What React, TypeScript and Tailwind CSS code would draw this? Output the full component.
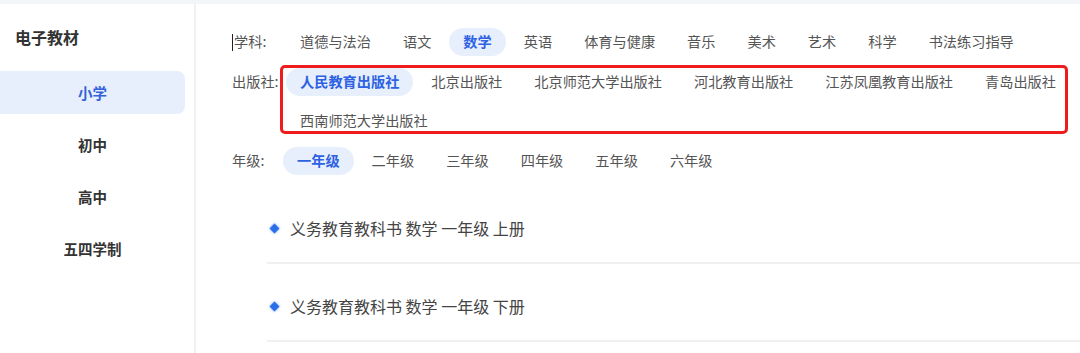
const font = { fontFamily: '"Noto Sans CJK SC", "Noto Sans", sans-serif' }

interface FilterRowProps {
  label: string
  items: string[]
  active: string
  caret?: boolean
  labelWidth?: string
}

function FilterRow({ label, items, active, caret, labelWidth = 'w-[54px]' }: FilterRowProps) {
  return (
    <div className="flex items-start">
      <div className={`${labelWidth} h-[28px] flex items-center text-[14.2px] text-[#555] shrink-0`}>
        {caret && <span className="w-px h-[17px] bg-[#222] mr-px" />}
        {label}
      </div>
      <div className="flex flex-wrap gap-x-1 gap-y-[11px] flex-1">
        {items.map((it) => (
          <div
            key={it}
            className={`h-[28px] px-[14px] flex items-center rounded-full text-[14.2px] whitespace-nowrap ${
              it === active ? 'bg-[#e8effc] text-[#2d62e3] font-bold' : 'text-[#555]'
            }`}
          >
            {it}
          </div>
        ))}
      </div>
    </div>
  )
}

function BookItem({ title }: { title: string }) {
  return (
    <div className="h-[78px] pt-[31px] border-b-2 border-[#f0f0f0] flex items-start">
      <div className="flex items-center h-[22px] pl-[2px]">
        <span className="w-[7px] h-[7px] rotate-45 bg-[#2a6ee8] shadow-[0_0_3px_#7aa7f5] ml-[2px]" />
        <span className="ml-[12px] text-[16px] text-[#444]">{title}</span>
      </div>
    </div>
  )
}

export default function App() {
  const subjects = ['道德与法治', '语文', '数学', '英语', '体育与健康', '音乐', '美术', '艺术', '科学', '书法练习指导']
  const publishers = ['人民教育出版社', '北京出版社', '北京师范大学出版社', '河北教育出版社', '江苏凤凰教育出版社', '青岛出版社', '西南师范大学出版社']
  const grades = ['一年级', '二年级', '三年级', '四年级', '五年级', '六年级']
  const levels = ['小学', '初中', '高中', '五四学制']

  return (
    <div className="w-[1080px] h-[353px] bg-white overflow-hidden flex flex-col" style={font}>
      <div className="h-1 bg-[#f3f5f8] shrink-0" />
      <div className="flex flex-1">
        {/* sidebar */}
        <div className="w-[196px] border-r-2 border-[#f0f0f2] shrink-0">
          <div className="pl-[15px] pt-[21px] text-[16px] font-bold text-[#333] leading-6">电子教材</div>
          <div className="mt-[22px] flex flex-col gap-[9px]">
            {levels.map((l, i) => (
              <div
                key={l}
                className={`w-[185px] h-[43px] flex items-center justify-center text-[14.5px] font-bold rounded-r-[8px] ${
                  i === 0 ? 'bg-[#e8effc] text-[#3461dc]' : 'text-[#333]'
                }`}
              >
                {l}
              </div>
            ))}
          </div>
        </div>

        {/* main */}
        <div className="flex-1 pl-[36px] pt-[24px] relative">
          <div className="flex flex-col gap-3">
            <FilterRow label="学科:" items={subjects} active="数学" caret />
            <FilterRow label="出版社:" items={publishers} active="人民教育出版社" />
            <FilterRow label="年级:" items={grades} active="一年级" labelWidth="w-[51px]" />
          </div>
          <div className="mt-[11px] ml-[35px]">
            <BookItem title="义务教育教科书 数学 一年级 上册" />
            <BookItem title="义务教育教科书 数学 一年级 下册" />
          </div>
          {/* annotation box */}
          <div className="absolute left-[84px] top-[61px] w-[788px] h-[69px] border-[3px] border-[#ee1c1c] rounded-[5px] pointer-events-none" />
        </div>
      </div>
    </div>
  )
}
